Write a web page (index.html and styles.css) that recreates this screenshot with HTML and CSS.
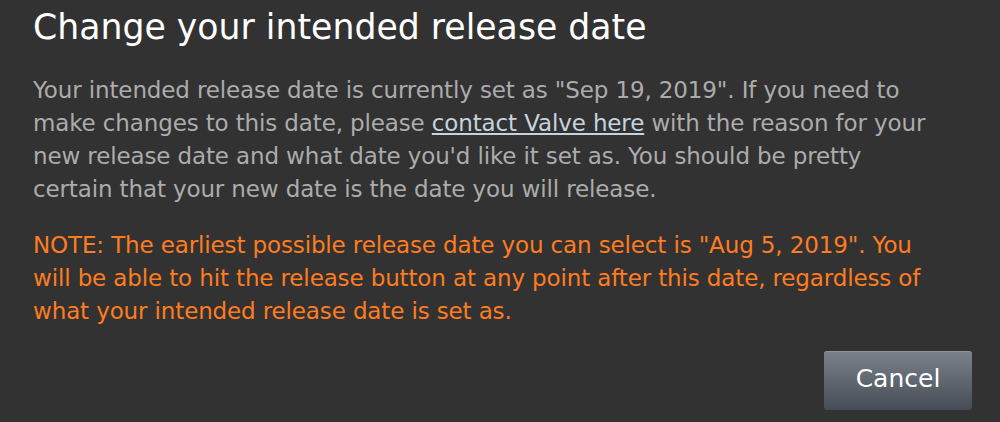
FILE: index.html
```html
<!DOCTYPE html>
<html lang="en">
<head>
    <meta charset="UTF-8">
    <meta name="viewport" content="width=device-width, initial-scale=1.0">
    <title>Change your intended release date</title>
    <link rel="stylesheet" href="styles.css">
</head>
<body>
    <div class="dialog">
        <h1 class="title">Change your intended release date</h1>
        <div class="content">
            <p>Your intended release date is currently set as "Sep 19, 2019". If you need to make changes to this date, please <a href="#">contact Valve here</a> with the reason for your new release date and what date you'd like it set as. You should be pretty certain that your new date is the date you will release.</p>
            <p class="note">NOTE: The earliest possible release date you can select is "Aug 5, 2019". You will be able to hit the release button at any point after this date, regardless of what your intended release date is set as.</p>
        </div>
        <div class="actions">
            <button class="btn">Cancel</button>
        </div>
    </div>
</body>
</html>
```

FILE: styles.css
```css
body {
    margin: 0;
    padding: 0;
    background-color: #323232;
    font-family: "DejaVu Sans", Verdana, sans-serif;
}
.dialog {
    padding: 4px 28px 0 33px;
}
.title {
    margin: 0;
    color: #ffffff;
    font-size: 34.7px;
    font-weight: normal;
    line-height: 46px;
}
.content {
    max-width: 905px;
    margin-top: 24px;
    font-size: 23px;
    line-height: 33px;
    letter-spacing: -0.13px;
    color: #acacac;
}
.content p {
    margin: 0 0 23px 0;
}
.content a {
    color: #c6d4df;
    text-decoration: underline;
}
.note {
    color: #ff7c20;
}
.actions {
    display: flex;
    justify-content: flex-end;
    margin-top: 2px;
}
.btn {
    width: 148px;
    height: 59px;
    padding-bottom: 5px;
    border: none;
    border-radius: 3px;
    background: linear-gradient(to bottom, #7b828b, #454c55);
    box-shadow: inset 0 1px 0 rgba(255, 255, 255, 0.15);
    color: #ffffff;
    font-family: inherit;
    font-size: 25px;
    cursor: pointer;
}
```
